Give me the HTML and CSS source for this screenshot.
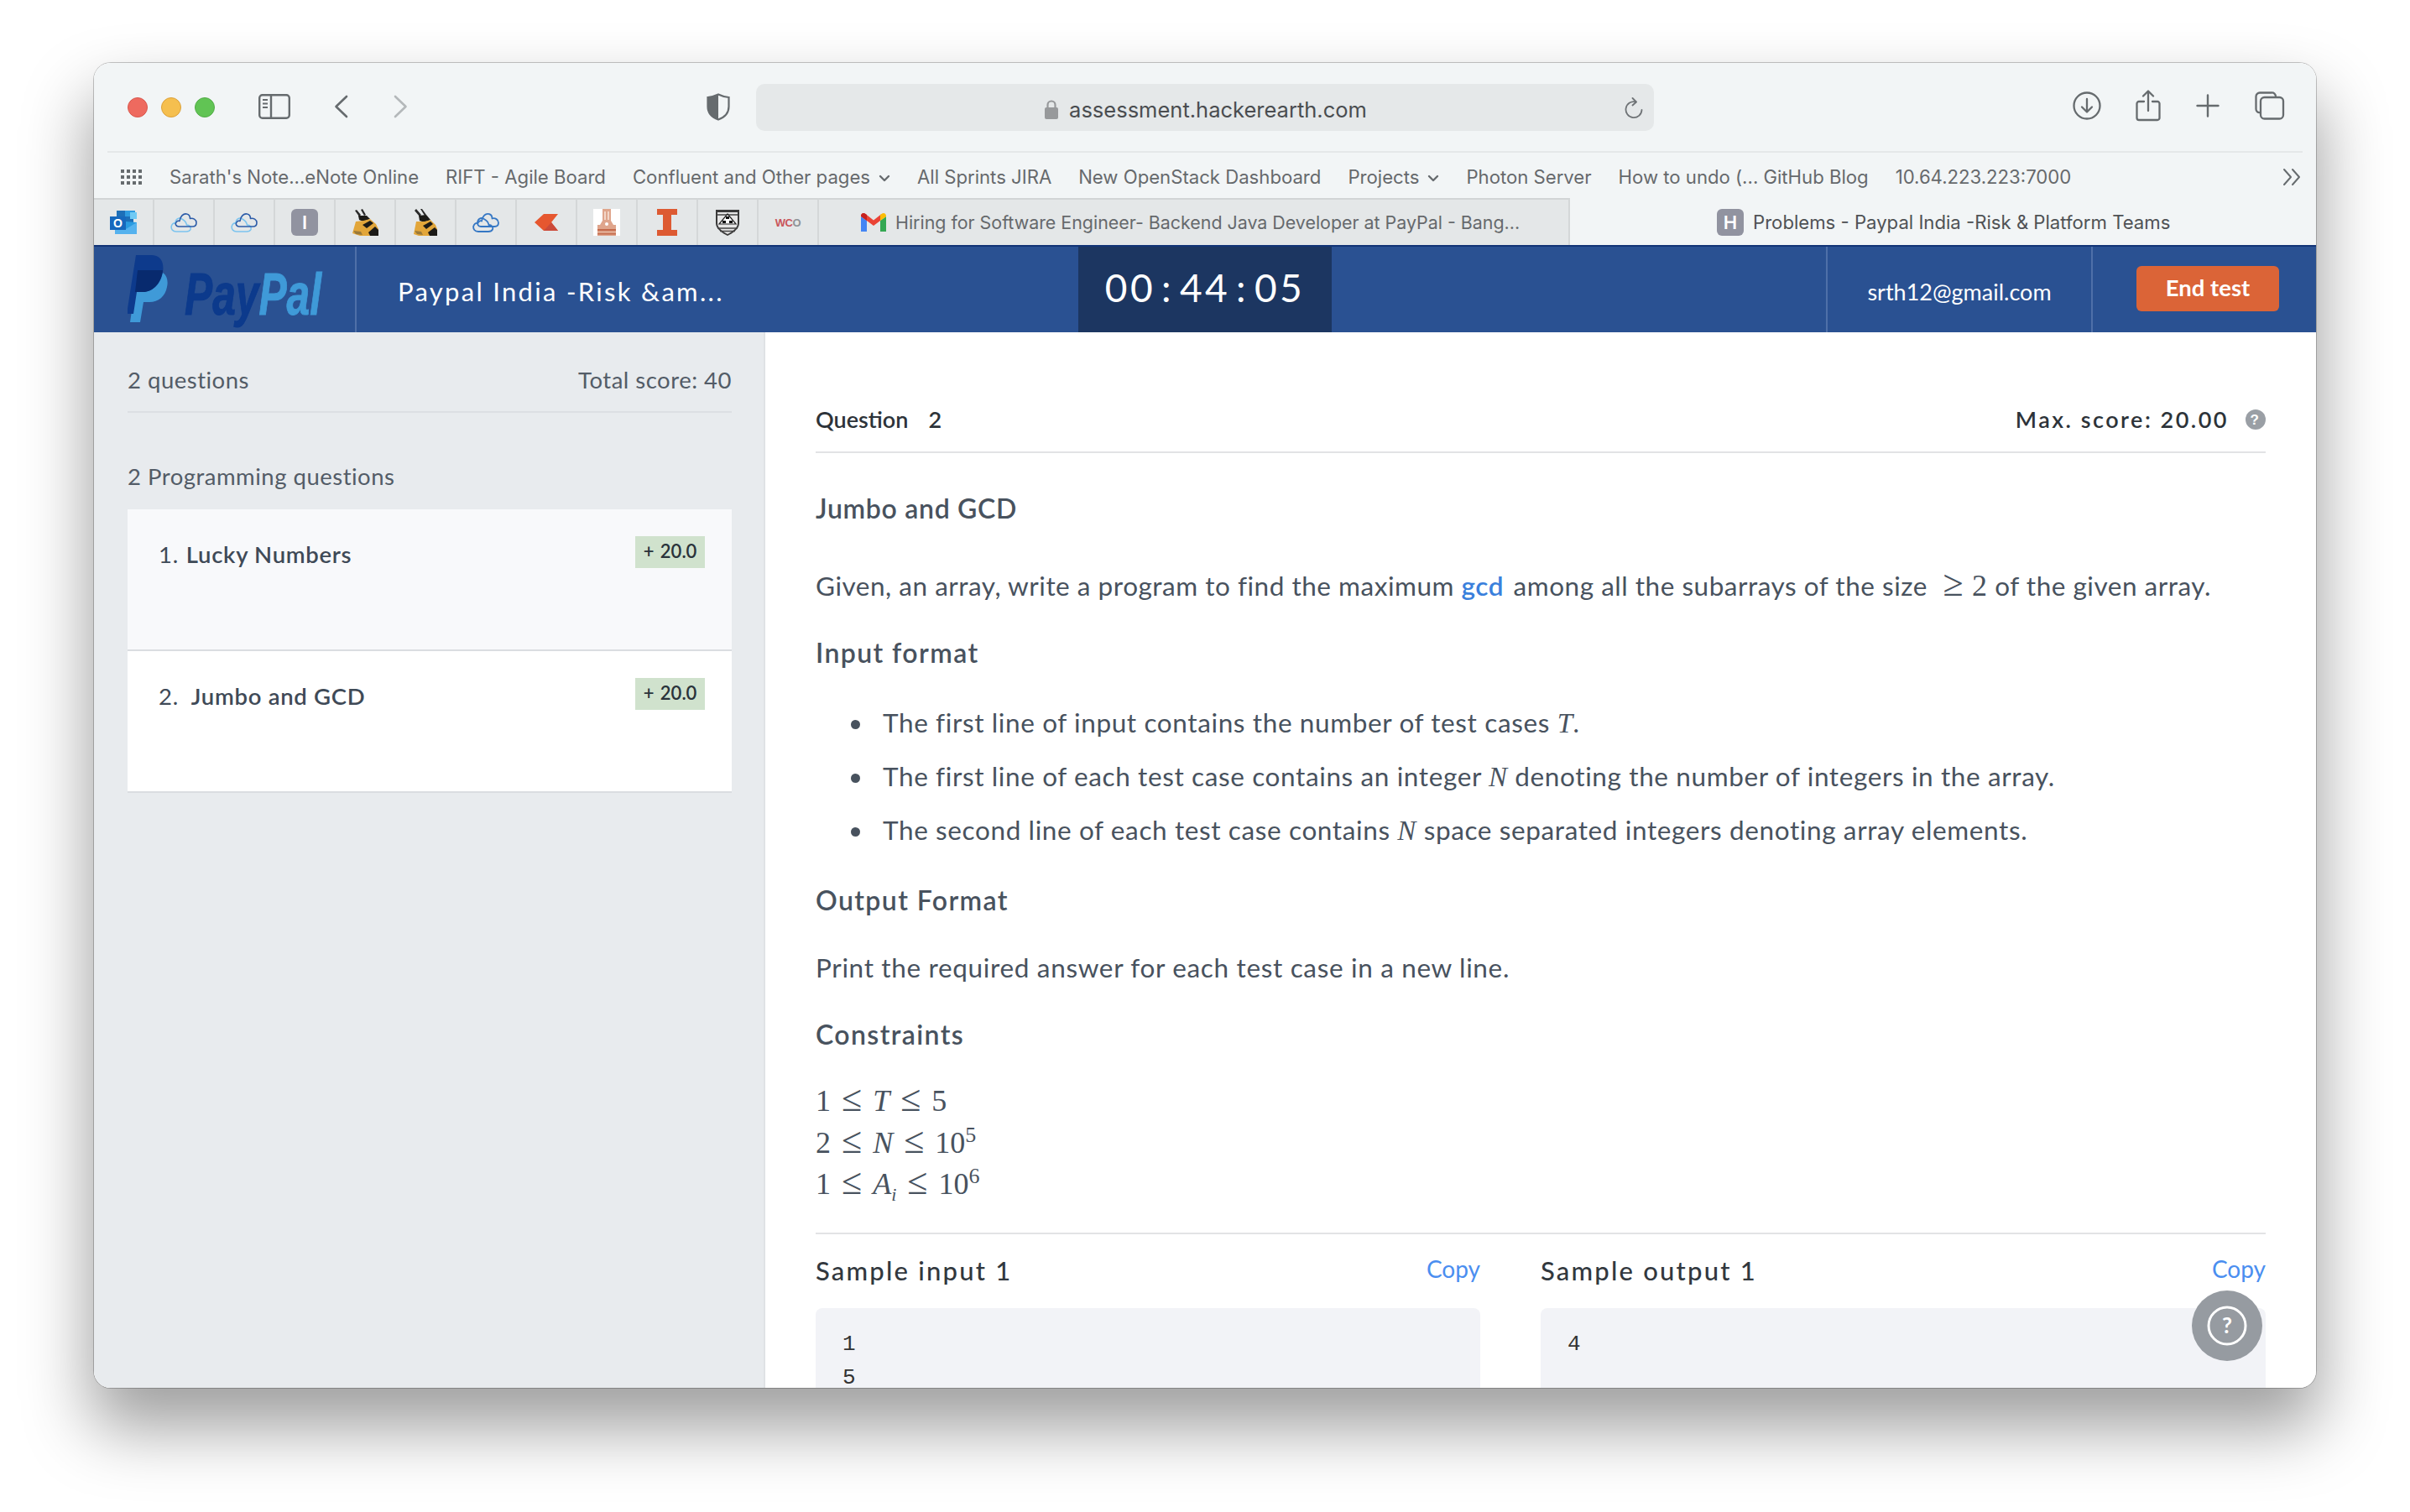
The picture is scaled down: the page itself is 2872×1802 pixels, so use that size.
FILE: index.html
```html
<!DOCTYPE html>
<html lang="en">
<head>
    <meta charset="UTF-8">
    <meta name="viewport" content="width=device-width, initial-scale=1.0">
    <title>Problems - Paypal India -Risk &amp; Platform Teams</title>
    <link rel="stylesheet" href="styles.css">
</head>
<body>
    <div class="window">
        <!-- browser toolbar -->
        <div class="toolbar">
            <div class="lights">
                <span class="light red"></span>
                <span class="light yellow"></span>
                <span class="light green"></span>
            </div>
            <svg class="ico-sidebar" width="38" height="30" viewBox="0 0 38 30" fill="none" stroke="#666b6e" stroke-width="2.4">
                <rect x="1.2" y="1.2" width="35.6" height="27.6" rx="3.5"/>
                <path d="M15 1.2V28.8"/>
                <path d="M5 7h6M5 11.5h6M5 16h6" stroke-width="2"/>
            </svg>
            <svg class="ico-back" width="17" height="28" viewBox="0 0 17 28" fill="none" stroke="#666b6e" stroke-width="2.6" stroke-linecap="round" stroke-linejoin="round">
                <path d="M15 2L2.5 14L15 26"/>
            </svg>
            <svg class="ico-forward" width="17" height="28" viewBox="0 0 17 28" fill="none" stroke="#b4b8ba" stroke-width="2.6" stroke-linecap="round" stroke-linejoin="round">
                <path d="M2 2L14.5 14L2 26"/>
            </svg>
            <svg class="ico-shield" width="28" height="33" viewBox="0 0 28 33">
                <path d="M14 1.5C18 3.5 22 4.5 26.5 5V16C26.5 24 21 29 14 31.5C7 29 1.5 24 1.5 16V5C6 4.5 10 3.5 14 1.5Z" fill="none" stroke="#666b6e" stroke-width="2.2"/>
                <path d="M14 1.5C10 3.5 6 4.5 1.5 5V16C1.5 24 7 29 14 31.5Z" fill="#666b6e"/>
            </svg>
            <div class="urlbar">
                <div class="url">
                    <svg width="16" height="23" viewBox="0 0 16 23">
                        <path d="M3.5 10V6a4.5 4.5 0 0 1 9 0v4" fill="none" stroke="#97999b" stroke-width="2.2"/>
                        <rect x="0" y="9" width="16" height="14" rx="2" fill="#97999b"/>
                    </svg>
                    <span>assessment.hackerearth.com</span>
                </div>
                <svg class="ico-reload" width="22" height="26" viewBox="0 0 22 26" fill="none" stroke="#6f7376" stroke-width="1.8" stroke-linecap="round" stroke-linejoin="round">
                    <path d="M13.5 5.5A9.5 9.5 0 1 0 20.5 15"/>
                    <path d="M9.5 1L14 5.5L9.5 9.5"/>
                </svg>
            </div>
            <div class="tools">
                <svg width="34" height="34" viewBox="0 0 34 34" fill="none" stroke="#666b6e" stroke-width="2.3" stroke-linecap="round" stroke-linejoin="round">
                    <circle cx="17" cy="17" r="15.5"/>
                    <path d="M17 9V24M11 18.5L17 24.5L23 18.5"/>
                </svg>
                <svg width="30" height="38" viewBox="0 0 30 38" fill="none" stroke="#666b6e" stroke-width="2.3" stroke-linecap="round" stroke-linejoin="round">
                    <path d="M10 14H4a2.500 2.500 0 0 0-2.500 2.500V33.500A2.500 2.500 0 0 0 4 36H26a2.500 2.500 0 0 0 2.500-2.500V16.500A2.500 2.500 0 0 0 26 14H20"/>
                    <path d="M15 25V2M9 7.500L15 1.500L21 7.500"/>
                </svg>
                <svg width="28" height="28" viewBox="0 0 28 28" fill="none" stroke="#666b6e" stroke-width="2.4" stroke-linecap="round">
                    <path d="M14 1.500V26.500M1.500 14H26.500"/>
                </svg>
                <svg width="36" height="34" viewBox="0 0 36 34" fill="none" stroke="#666b6e" stroke-width="2.3" stroke-linejoin="round">
                    <path d="M6 25A4 4 0 0 1 1.500 21V6A4.500 4.500 0 0 1 6 1.500H20A4.500 4.500 0 0 1 25 6"/>
                    <rect x="7" y="7" width="27" height="25.500" rx="4.500"/>
                </svg>
            </div>
        </div>

        <!-- bookmarks -->
        <div class="bookmarks">
            <svg class="ico-grid" width="26" height="18" viewBox="0 0 26 18" fill="#666b6e">
                <rect x="0" y="0" width="4" height="4"/><rect x="7" y="0" width="4" height="4"/><rect x="14" y="0" width="4" height="4"/><rect x="21" y="0" width="4" height="4"/>
                <rect x="0" y="7" width="4" height="4"/><rect x="7" y="7" width="4" height="4"/><rect x="14" y="7" width="4" height="4"/><rect x="21" y="7" width="4" height="4"/>
                <rect x="0" y="14" width="4" height="4"/><rect x="7" y="14" width="4" height="4"/><rect x="14" y="14" width="4" height="4"/><rect x="21" y="14" width="4" height="4"/>
            </svg>
            <span class="mark">Sarath's Note...eNote Online</span>
            <span class="mark">RIFT - Agile Board</span>
            <span class="mark">Confluent and Other pages<svg class="chev" width="14" height="9" viewBox="0 0 14 9" fill="none" stroke="#666b6e" stroke-width="2.400" stroke-linecap="round" stroke-linejoin="round"><path d="M2 2L7 7L12 2"/></svg></span>
            <span class="mark">All Sprints JIRA</span>
            <span class="mark">New OpenStack Dashboard</span>
            <span class="mark">Projects<svg class="chev" width="14" height="9" viewBox="0 0 14 9" fill="none" stroke="#666b6e" stroke-width="2.400" stroke-linecap="round" stroke-linejoin="round"><path d="M2 2L7 7L12 2"/></svg></span>
            <span class="mark">Photon Server</span>
            <span class="mark">How to undo (... GitHub Blog</span>
            <span class="mark">10.64.223.223:7000</span>
            <svg class="ico-more" width="22" height="22" viewBox="0 0 22 22" fill="none" stroke="#666b6e" stroke-width="2" stroke-linecap="round" stroke-linejoin="round">
                <path d="M2 2L10 11L2 20M12 2L20 11L12 20"/>
            </svg>
        </div>

        <!-- pinned tabs and open tabs -->
        <div class="tabs">
            <div class="pin">
                <svg width="32" height="28" viewBox="0 0 32 28">
                    <rect x="8" y="0" width="20" height="14" fill="#1d6fb8"/>
                    <rect x="18" y="0" width="12" height="7" fill="#2f9be0"/>
                    <rect x="24" y="2" width="8" height="8" fill="#6fcaf5"/>
                    <path d="M6 12L32 14V28H6Z" fill="#2a9be0"/>
                    <path d="M6 14L19 22L32 14V28H6Z" fill="#55b2ee"/>
                    <rect x="0" y="7" width="19" height="16" fill="#1668bd"/>
                    <text x="9.500" y="20" font-size="14" font-weight="700" fill="#fff" text-anchor="middle" font-family="Liberation Sans, sans-serif">O</text>
                </svg>
            </div>
            <div class="pin"><svg width="32" height="24" viewBox="0 0 32 24" fill="none" stroke-width="1.600" stroke-linejoin="round"><path d="M7 23C2.500 23 .800 19.500 1.200 17C1.600 14 4 12.500 6 13C6 8 10 6 13 7.500C16 9 19 12 19.500 15C23 15 25 18 24 20.500C23 22.500 21 23 19 23Z" stroke="#7cc4ee"/><path d="M10 17C6.500 17 5.500 13.500 7 12C8 10 10 10 11 10.500C11.500 5 15.500 1 19.500 2C22 2.500 23.500 5 23.500 7.500C27 6.500 31 8.500 31 12.500C31 15.500 29 17 26.500 17Z" stroke="#2b5ba8"/></svg></div>
            <div class="pin"><svg width="32" height="24" viewBox="0 0 32 24" fill="none" stroke-width="1.600" stroke-linejoin="round"><path d="M7 23C2.500 23 .800 19.500 1.200 17C1.600 14 4 12.500 6 13C6 8 10 6 13 7.500C16 9 19 12 19.500 15C23 15 25 18 24 20.500C23 22.500 21 23 19 23Z" stroke="#7cc4ee"/><path d="M10 17C6.500 17 5.500 13.500 7 12C8 10 10 10 11 10.500C11.500 5 15.500 1 19.500 2C22 2.500 23.500 5 23.500 7.500C27 6.500 31 8.500 31 12.500C31 15.500 29 17 26.500 17Z" stroke="#2b5ba8"/></svg></div>
            <div class="pin"><span class="letter">I</span></div>
            <div class="pin">
                <svg width="32" height="32" viewBox="0 0 32 32">
                    <path d="M4 2L6 1L11 7L9 9ZM11 1L13 0L17 7L15 8Z" fill="#2a2a2a"/>
                    <path d="M8 8L18 8L22 12L14 15L9 13Z" fill="#1b1a17"/>
                    <path d="M5 15L14 14L22 12L29 18L32 24V32H10L1 29Z" fill="#e2a63a"/>
                    <path d="M13 19L22 14L26 17L18 23Z" fill="#1b1a17"/>
                    <path d="M20 28L28 21L32 25V32H22Z" fill="#1b1a17"/>
                    <path d="M2 26L11 27L13 31L5 30Z" fill="#9a7a3a"/>
                </svg>
            </div>
            <div class="pin">
                <svg width="28" height="32" viewBox="0 0 28 32">
                    <path d="M1 2L3 0L9 7L7 9ZM8 0L10 0L15 7L13 8Z" fill="#2a2a2a"/>
                    <path d="M6 8L15 7L20 13L13 16L7 14Z" fill="#1b1a17"/>
                    <path d="M3 15L13 15L20 13L26 19L28 24V32H6L0 30Z" fill="#e2a63a"/>
                    <path d="M11 20L20 15L23 18L15 24Z" fill="#1b1a17"/>
                    <path d="M17 28L25 22L28 25V32H19Z" fill="#1b1a17"/>
                    <path d="M1 26L9 27L11 31L4 30Z" fill="#9a7a3a"/>
                </svg>
            </div>
            <div class="pin"><svg width="32" height="24" viewBox="0 0 32 24" fill="none" stroke-width="1.800" stroke="#3577c4" stroke-linejoin="round"><path d="M7 23C2.500 23 .800 19.500 1.200 17C1.600 14 4 12.500 6 13C6 8 10 6 13 7.500C16 9 19 12 19.500 15C23 15 25 18 24 20.500C23 22.500 21 23 19 23Z"/><path d="M10 17C6.500 17 5.500 13.500 7 12C8 10 10 10 11 10.500C11.500 5 15.500 1 19.500 2C22 2.500 23.500 5 23.500 7.500C27 6.500 31 8.500 31 12.500C31 15.500 29 17 26.500 17Z"/></svg></div>
            <div class="pin">
                <svg width="28" height="20" viewBox="0 0 28 20">
                    <path d="M28 0H11L0 10L11 20H28L20 10Z" fill="#e6572f"/>
                    <path d="M28 20H11L20 10Z" fill="#cb4a3a"/>
                </svg>
            </div>
            <div class="pin">
                <svg width="32" height="32" viewBox="0 0 32 32">
                    <rect width="32" height="32" fill="#fff"/>
                    <path d="M11 0H21V14L24 19H27V32H5V19H8L11 14Z" fill="#dfa58c"/>
                    <path d="M13 3H15V13H13ZM17 3H19V13H17Z" fill="#f2d6c8"/>
                    <path d="M5 24H27V26H5ZM5 29H27V30.500H5Z" fill="#c4694a"/>
                    <circle cx="16" cy="18" r="2" fill="#fff"/>
                </svg>
            </div>
            <div class="pin">
                <svg width="24" height="32" viewBox="0 0 24 32">
                    <path d="M0 0H24V7H17V25H24V32H0V25H7V7H0Z" fill="#dd5a32"/>
                </svg>
            </div>
            <div class="pin">
                <svg width="28" height="32" viewBox="0 0 28 32">
                    <path d="M0 1H28V17C28 24 20 29 14 32C8 29 0 24 0 17Z" fill="#3a3a3a"/>
                    <path d="M2 4H26V17C26 23 19 27.500 14 30C9 27.500 2 23 2 17Z" fill="#e6e6e6"/>
                    <path d="M2 7H26M2 23H26M5 26.500H23" stroke="#444" stroke-width="1.500"/>
                    <path d="M14 6L24 18H4Z" fill="#fff" stroke="#222" stroke-width="1.200"/>
                    <rect x="12" y="9" width="4" height="3" fill="#111"/>
                    <rect x="8" y="14" width="4" height="3" fill="#111"/>
                    <rect x="16" y="14" width="4" height="3" fill="#111"/>
                </svg>
            </div>
            <div class="pin"><span class="wco">WC<i>O</i></span></div>
            <div class="tab">
                <svg width="30" height="22" viewBox="0 0 30 22">
                    <path d="M0 4V22H7V9Z" fill="#4285f4"/>
                    <path d="M30 4V22H23V9Z" fill="#34a853"/>
                    <path d="M0 3.500C0 .500 3 -1 5.500 1L15 8.500L24.500 1L23 9L15 15L7 9Z" fill="#ea4335"/>
                    <path d="M23 9V2L24.500 1C27 -1 30 .500 30 3.500V4Z" fill="#fbbc04"/>
                    <path d="M0 3.500V4L7 9V2L5.500 1C3 -1 0 .500 0 3.500Z" fill="#c5221f"/>
                </svg>
                <span>Hiring for Software Engineer- Backend Java Developer at PayPal - Bang...</span>
            </div>
            <div class="tab-active">
                <span class="letter">H</span>
                <span>Problems - Paypal India -Risk &amp; Platform Teams</span>
            </div>
        </div>

        <!-- test header -->
        <header class="head">
            <div class="logo">
                <svg class="logo-mark" width="48" height="80" viewBox="0 0 48 80">
                    <path d="M12 18H32C42 18 50 25 47 38C45 49 37 56 26 56H19L15 80H3Z" fill="#3f9ad8"/>
                    <path d="M10 0H28C39 0 44 8 42 20C40 34 30 44 18 44H11L7 70H-1Z" fill="#0d3a8c"/>
                    <path d="M12 18H42C40 34 30 44 18 44H9Z" fill="#082a6e"/>
                </svg>
                <span class="wordmark"><span class="pay">Pay</span><span class="pal">Pal</span></span>
            </div>
            <div class="test-name">Paypal India -Risk &amp;am...</div>
            <div class="timer">00<b>:</b>44<b>:</b>05</div>
            <div class="email">srth12@gmail.com</div>
            <div class="end-wrap"><button class="end-btn">End test</button></div>
        </header>

        <div class="content">
            <aside class="side">
                <div class="side-top">
                    <span>2 questions</span>
                    <span>Total score: 40</span>
                </div>
                <div class="side-title">2 Programming questions</div>
                <div class="card card-grey">
                    <div class="card-name"><span class="num num-one">1.</span>Lucky Numbers</div>
                    <span class="badge">+ 20.0</span>
                </div>
                <div class="card">
                    <div class="card-name"><span class="num">2.</span>Jumbo and GCD</div>
                    <span class="badge">+ 20.0</span>
                </div>
            </aside>

            <main class="main">
                <div class="q-head">
                    <span class="q-no">Question<span class="q-n">2</span></span>
                    <span class="q-score">Max. score: 20.00<svg width="24" height="24" viewBox="0 0 24 24"><circle cx="12" cy="12" r="12" fill="#9a9fa5"/><text x="12" y="18" font-size="17" font-weight="700" fill="#fff" text-anchor="middle" font-family="Liberation Sans, sans-serif">?</text></svg></span>
                </div>
                <h2 class="q-title">Jumbo and GCD</h2>
                <p class="para">Given, an array, write a program to find the maximum <a class="link">gcd</a> among all the subarrays of the size <span class="tex tex-ge"><span class="op">≥</span>2</span> of the given array.</p>
                <h3 class="sub">Input format</h3>
                <ul class="list">
                    <li>The first line of input contains the number of test cases <i class="tex">T</i>.</li>
                    <li>The first line of each test case contains an integer <i class="tex">N</i> denoting the number of integers in the array.</li>
                    <li>The second line of each test case contains <i class="tex">N</i> space separated integers denoting array elements.</li>
                </ul>
                <h3 class="sub sub-out">Output Format</h3>
                <p class="para para-out">Print the required answer for each test case in a new line.</p>
                <h3 class="sub sub-con">Constraints</h3>
                <div class="math">
                    <div>1<span class="op">≤</span><i>T</i><span class="op">≤</span>5</div>
                    <div>2<span class="op">≤</span><i>N</i><span class="op">≤</span>10<sup>5</sup></div>
                    <div>1<span class="op">≤</span><i>A<sub>i</sub></i><span class="op">≤</span>10<sup>6</sup></div>
                </div>
                <div class="samples">
                    <div class="sample sample-in">
                        <div class="sample-head"><span>Sample input 1</span><a class="copy">Copy</a></div>
                        <pre class="code">1
5</pre>
                    </div>
                    <div class="sample">
                        <div class="sample-head"><span>Sample output 1</span><a class="copy">Copy</a></div>
                        <pre class="code">4</pre>
                    </div>
                </div>
            </main>
        </div>

        <div class="help">
            <svg width="48" height="48" viewBox="0 0 48 48">
                <circle cx="24" cy="24" r="22" fill="none" stroke="#fff" stroke-width="3"/>
                <text x="24" y="33" font-size="26" font-weight="700" fill="#fff" text-anchor="middle" font-family="Lato, sans-serif">?</text>
            </svg>
        </div>
    </div>
</body>
</html>
```

FILE: styles.css
```css
html, body {
    margin: 0;
    padding: 0;
    background: #fff;
}
body {
    width: 2872px;
    height: 1802px;
    overflow: hidden;
    padding: 75px 0 0 112px;
    box-sizing: border-box;
    font-family: Lato, "Open Sans", sans-serif;
    color: #48525e;
}
.window {
    position: relative;
    width: 2648px;
    height: 1579px;
    border-radius: 20px;
    overflow: hidden;
    display: flex;
    flex-direction: column;
    background: #fff;
}
body::before {
    content: "";
    position: absolute;
    left: 112px;
    top: 75px;
    width: 2648px;
    height: 1579px;
    border-radius: 20px;
    box-shadow: 0 0 0 1px rgba(0, 0, 0, 0.22), 0 44px 80px 4px rgba(0, 0, 0, 0.38);
}

/* toolbar */
.toolbar {
    height: 107px;
    flex: none;
    background: #f2f5f6;
    display: flex;
    align-items: flex-start;
    position: relative;
}
.toolbar::after {
    content: "";
    position: absolute;
    left: 16px;
    right: 16px;
    bottom: 0;
    height: 2px;
    background: #e5e8e9;
}
.lights {
    display: flex;
    gap: 16px;
    margin: 41px 0 0 40px;
}
.light {
    width: 24px;
    height: 24px;
    border-radius: 50%;
    box-sizing: border-box;
}
.red { background: #ee6a5f; border: 1px solid #d9574d; }
.yellow { background: #f5bf4f; border: 1px solid #dca13a; }
.green { background: #61c454; border: 1px solid #52ab47; }
.ico-sidebar { margin: 37px 0 0 52px; }
.ico-back { margin: 38px 0 0 52px; }
.ico-forward { margin: 38px 0 0 54px; }
.ico-shield { margin: 36px 0 0 356px; }
.urlbar {
    width: 1070px;
    height: 56px;
    margin: 25px 0 0 31px;
    background: #e5e8e9;
    border-radius: 10px;
    position: relative;
    display: flex;
    justify-content: center;
    align-items: center;
}
.url {
    display: flex;
    align-items: center;
    gap: 13px;
    font-family: Inter, sans-serif;
    font-size: 25.500px;
    color: #4a4d50;
    margin: 4px 0 0 2px;
}
.ico-reload {
    position: absolute;
    right: 13px;
    top: 16px;
}
.tools {
    display: flex;
    align-items: center;
    gap: 41px;
    margin: 32px 0 0 499px;
}
.tools svg + svg + svg { margin-left: 1px; }
.tools svg + svg + svg + svg { margin-left: 1px; }

/* bookmarks */
.bookmarks {
    height: 54px;
    flex: none;
    box-sizing: border-box;
    padding: 4px 0 0 32px;
    background: #f2f5f6;
    display: flex;
    align-items: center;
    gap: 32px;
    font-family: Inter, sans-serif;
    font-size: 22.150px;
    color: #66696c;
    position: relative;
}
.ico-grid { margin-right: 0; }
.mark { white-space: nowrap; }
.chev { margin-left: 10px; vertical-align: 2px; }
.ico-more {
    position: absolute;
    right: 18px;
    top: 18px;
}

/* tabs */
.tabs {
    height: 56px;
    flex: none;
    display: flex;
    background: #f2f5f6;
    font-family: Inter, sans-serif;
    font-size: 22.150px;
    color: #66696c;
}
.pin {
    width: 72px;
    box-sizing: border-box;
    background: #e4e7e8;
    border-right: 2px solid #d4d7d8;
    border-top: 2px solid #d2d5d6;
    display: flex;
    justify-content: center;
    align-items: center;
}
.letter {
    width: 32px;
    height: 32px;
    border-radius: 6px;
    background: #9193a0;
    color: #fff;
    font-size: 22px;
    font-weight: 600;
    display: flex;
    justify-content: center;
    align-items: center;
    flex: none;
}
.wco {
    font: 700 13px "Liberation Sans", sans-serif;
    color: #c9555a;
    letter-spacing: -0.5px;
}
.wco i { font-style: normal; color: #8f9396; }
.tab {
    width: 895px;
    box-sizing: border-box;
    background: #e4e7e8;
    border-right: 2px solid #d4d7d8;
    border-top: 2px solid #d2d5d6;
    display: flex;
    align-items: center;
    gap: 11px;
    padding-left: 50px;
    font-size: 21.400px;
    white-space: nowrap;
}
.tab-active {
    flex: 1;
    display: flex;
    align-items: center;
    gap: 11px;
    padding: 2px 0 0 175px;
    box-sizing: border-box;
    color: #4f5255;
    white-space: nowrap;
}

/* header */
.head {
    height: 104px;
    flex: none;
    box-sizing: border-box;
    background: #2a5192;
    border-top: 2px solid #123476;
    display: flex;
    color: #fff;
    position: relative;
}
.logo {
    width: 313px;
    flex: none;
    box-sizing: border-box;
    border-right: 2px solid #4f70a8;
    display: flex;
    align-items: flex-start;
    padding: 10px 0 0 40px;
    position: relative;
}
.logo-mark { flex: none; }
.wordmark {
    display: block;
    margin: 15px 0 0 20px;
    font: italic 700 70px/64px "Liberation Sans", sans-serif;
    -webkit-text-stroke: 1px currentColor;
    transform: scaleX(0.71);
    transform-origin: left top;
    white-space: nowrap;
}
.pay { color: #0c3a8c; }
.pal { color: #3f9ad8; }
.test-name {
    width: 860px;
    flex: none;
    box-sizing: border-box;
    padding: 34px 0 0 49px;
    font-size: 31px;
    letter-spacing: 2.300px;
    font-weight: 400;
}
.timer {
    width: 302px;
    flex: none;
    background: #1c3661;
    text-align: center;
    font-size: 46px;
    line-height: 98px;
    letter-spacing: 3.400px;
}
.timer b { font-weight: 400; margin: 0 7px; }
.email {
    margin-left: 589px;
    width: 318px;
    flex: none;
    box-sizing: border-box;
    border-left: 2px solid #4f70a8;
    border-right: 2px solid #4f70a8;
    text-align: center;
    font-size: 27px;
    padding-top: 37px;
}
.end-wrap {
    flex: 1;
    padding: 23px 0 0 52px;
}
.end-btn {
    width: 170px;
    height: 54px;
    background: #db6437;
    border: 0;
    border-radius: 6px;
    color: #fff;
    font: 700 27.500px Lato, sans-serif;
    padding: 0 0 4px;
}

/* page body */
.content {
    flex: 1;
    display: flex;
    min-height: 0;
}
.side {
    width: 800px;
    flex: none;
    box-sizing: border-box;
    background: #e8ebee;
    border-right: 2px solid #dfe2e5;
    padding: 0 38px 0 40px;
    font-size: 27.500px;
    letter-spacing: 0.500px;
    color: #535c67;
}
.side-top {
    display: flex;
    justify-content: space-between;
    height: 96px;
    padding-top: 40px;
    box-sizing: border-box;
    border-bottom: 2px solid #dcdfe3;
}
.side-title {
    margin: 59px 0 17px;
    height: 39px;
}
.card {
    height: 169px;
    box-sizing: border-box;
    background: #fff;
    border-bottom: 2px solid #dadde1;
    display: flex;
    justify-content: space-between;
    align-items: flex-start;
    padding: 32px 32px 0 37px;
}
.card-grey { background: #f8f9fb; }
.card-name {
    color: #3f4a57;
    font-weight: 600;
    font-size: 27.500px;
    letter-spacing: 0.700px;
    padding-top: 5px;
}
.num { font-weight: 400; margin-right: 15px; }
.num-one { margin-right: 9px; }
.badge {
    width: 83px;
    height: 38px;
    background: #d0e2cd;
    color: #2a333b;
    font-size: 22px;
    font-weight: 600;
    letter-spacing: 0;
    word-spacing: 2px;
    text-align: center;
    line-height: 36px;
    flex: none;
}
.main {
    flex: 1;
    padding: 0 60px 0 60px;
    overflow: hidden;
}
.q-head {
    display: flex;
    justify-content: space-between;
    box-sizing: border-box;
    padding-top: 87px;
    height: 144px;
    border-bottom: 2px solid #e2e3e5;
    font-size: 27px;
    color: #2d3339;
    font-weight: 600;
}
.q-n { margin-left: 24px; }
.q-score { letter-spacing: 2.500px; }
.q-score svg { margin-left: 20px; vertical-align: -2px; }
.q-title {
    margin: 46px 0 0;
    font-size: 32px;
    font-weight: 600;
    line-height: 40px;
    letter-spacing: 0.700px;
    color: #48525e;
}
.para {
    margin: 52px 0 0;
    font-size: 31.500px;
    line-height: 40px;
    letter-spacing: 0.520px;
    color: #48525e;
    white-space: nowrap;
}
.link { color: #3a80dc; font-weight: 600; margin-right: 3px; }
.tex {
    font-family: "Liberation Serif", serif;
    font-size: 33px;
    line-height: 0;
}
.tex-ge { font-size: 36px; }
.sub {
    margin: 40px 0 0;
    font-size: 32px;
    font-weight: 600;
    line-height: 40px;
    letter-spacing: 1.400px;
    color: #48525e;
}
.list {
    margin: 31px 0 0;
    padding: 0 0 0 80px;
    list-style: none;
    font-size: 31.500px;
    letter-spacing: 0.620px;
    line-height: 64px;
    white-space: nowrap;
}
.list li::before {
    content: "";
    display: inline-block;
    width: 11px;
    height: 11px;
    border-radius: 50%;
    background: #48525e;
    margin: 0 27px 4px -38px;
    vertical-align: middle;
}
.sub-out { margin-top: 32px; }
.para-out { margin-top: 40px; letter-spacing: 0.660px; }
.sub-con { margin-top: 40px; }
.math {
    margin-top: 35px;
    font: 36px/49.500px "Liberation Serif", serif;
    color: #48525e;
    height: 181px;
    border-bottom: 2px solid #e2e3e5;
}
.op { font-size: 44px; margin: 0 13px; line-height: 0; }
.tex-ge .op { margin: 0 10px 0 10px; }
.math sup, .math sub {
    font-size: 26px;
    line-height: 0;
}
.math sub { font-size: 22px; }
.samples {
    display: flex;
    gap: 72px;
}
.sample { flex: 1; min-width: 0; }
.sample-in { flex: none; width: 792px; }
.sample-head {
    display: flex;
    justify-content: space-between;
    align-items: flex-start;
    height: 88px;
    padding-top: 24px;
    box-sizing: border-box;
    font-size: 31px;
    font-weight: 500;
    letter-spacing: 2.200px;
    color: #32383e;
}
.copy {
    color: #4a8ef0;
    font-size: 28px;
    font-weight: 400;
    letter-spacing: 0;
}
.code {
    margin: 0;
    background: #f2f3f7;
    border-radius: 8px;
    padding: 23px 32px;
    height: 200px;
    font: 26px/40px "Liberation Mono", monospace;
    color: #333;
}

.help {
    position: absolute;
    left: 2500px;
    top: 1463px;
    width: 84px;
    height: 84px;
    border-radius: 50%;
    background: #969ba1;
    display: flex;
    justify-content: center;
    align-items: center;
}
```
